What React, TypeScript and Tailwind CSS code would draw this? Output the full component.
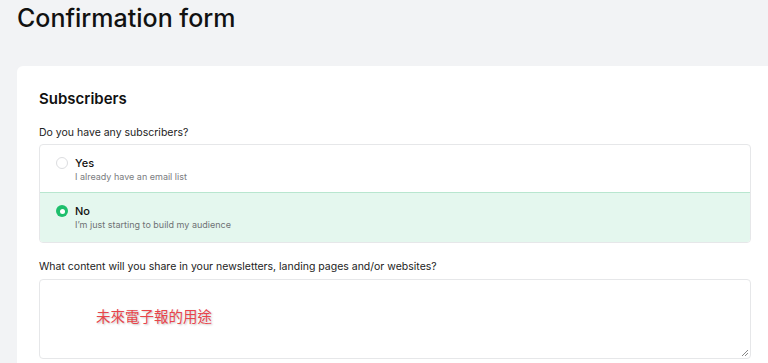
export default function App() {
	return (
		<div className="h-[363px] w-[768px] overflow-hidden bg-[#f2f3f5] font-['Inter',sans-serif] text-[#111]">
			<h1 className="pl-[17px] pt-[2px] text-[25px] font-medium leading-[32px] tracking-[0px]">
				Confirmation form
			</h1>
			<div className="ml-[17px] mt-[32px] w-[780px] rounded-tl-md bg-white pl-[22px] pr-[39px] pt-[23px] pb-[20px]">
				<h2 className="text-[15px] font-semibold leading-5">Subscribers</h2>
				<p className="mt-[16px] text-[10.5px] leading-4 text-[#222]">Do you have any subscribers?</p>

				{/* Radio options */}
				<div className="mt-[3px] w-[712px] overflow-hidden rounded border border-[#e6e7e9]">
					<label className="flex items-start gap-[7px] px-[16px] pt-[11px] pb-[9px]">
						<span className="mt-[1px] h-[12px] w-[12px] shrink-0 rounded-full border border-[#dcdde0] bg-white" />
						<span className="flex flex-col">
							<span className="text-[11px] font-medium leading-[14px]">Yes</span>
							<span className="mt-[1px] text-[9px] leading-[12px] text-[#7a7c80]">I already have an email list</span>
						</span>
					</label>
					<label className="flex items-start gap-[7px] border-t border-[#b8e6cf] bg-[#e4f7ee] px-[16px] pt-[11px] pb-[11px]">
						<span className="mt-[1px] flex h-[12px] w-[12px] shrink-0 items-center justify-center rounded-full bg-[#1dbf6c]">
							<span className="h-[5px] w-[5px] rounded-full bg-white" />
						</span>
						<span className="flex flex-col">
							<span className="text-[11px] font-medium leading-[14px]">No</span>
							<span className="mt-[1px] text-[9px] leading-[12px] text-[#6f7275]">I’m just starting to build my audience</span>
						</span>
					</label>
				</div>

				<p className="mt-[16px] text-[10.5px] leading-4 text-[#222]">
					What content will you share in your newsletters, landing pages and/or websites?
				</p>
				<div className="relative mt-[4px] h-[80px] w-[712px] rounded border border-[#e6e7e9] bg-white">
					<span className="absolute left-[56px] top-[26px] font-['Noto_Sans_CJK_TC',sans-serif] text-[14.5px] leading-5 text-[#e8444a] [text-shadow:1px_1px_2px_rgba(0,0,0,0.25)]">
						未來電子報的用途
					</span>
					<svg className="absolute bottom-[1px] right-[1px]" width="8" height="8" viewBox="0 0 8 8">
						<path d="M7 1L1 7M7 4L4 7" stroke="#888" strokeWidth="1" />
					</svg>
				</div>
			</div>
		</div>
	);
}
